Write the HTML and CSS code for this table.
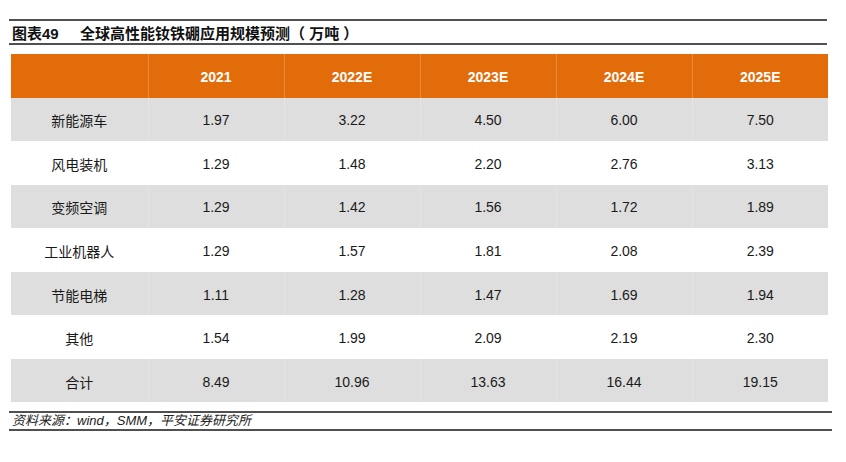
FILE: index.html
```html
<!DOCTYPE html>
<html lang="zh">
<head>
<meta charset="utf-8">
<link rel="stylesheet" href="styles.css">
</head>
<body>
<div class="page">
  <div class="title"><span class="fig">图表49</span><span class="name">全球高性能钕铁硼应用规模预测（ 万吨 ）</span></div>
  <table class="data">
    <colgroup><col class="c0"><col class="cn"><col class="cn"><col class="cn"><col class="cn"><col class="cn"></colgroup>
    <thead>
      <tr><th></th><th>2021</th><th>2022E</th><th>2023E</th><th>2024E</th><th>2025E</th></tr>
    </thead>
    <tbody>
      <tr class="alt"><td>新能源车</td><td>1.97</td><td>3.22</td><td>4.50</td><td>6.00</td><td>7.50</td></tr>
      <tr><td>风电装机</td><td>1.29</td><td>1.48</td><td>2.20</td><td>2.76</td><td>3.13</td></tr>
      <tr class="alt"><td>变频空调</td><td>1.29</td><td>1.42</td><td>1.56</td><td>1.72</td><td>1.89</td></tr>
      <tr><td>工业机器人</td><td>1.29</td><td>1.57</td><td>1.81</td><td>2.08</td><td>2.39</td></tr>
      <tr class="alt"><td>节能电梯</td><td>1.11</td><td>1.28</td><td>1.47</td><td>1.69</td><td>1.94</td></tr>
      <tr><td>其他</td><td>1.54</td><td>1.99</td><td>2.09</td><td>2.19</td><td>2.30</td></tr>
      <tr class="alt"><td>合计</td><td>8.49</td><td>10.96</td><td>13.63</td><td>16.44</td><td>19.15</td></tr>
    </tbody>
  </table>
  <div class="source">资料来源：wind，SMM，平安证券研究所</div>
</div>
</body>
</html>
```
FILE: styles.css
```css
html, body {
  margin: 0;
  padding: 0;
  background: #ffffff;
}
body {
  font-family: "Liberation Sans", Arial, "Noto Sans CJK SC", sans-serif;
  color: #1a1a1a;
}
.page {
  padding: 19px 0 0 9px;
  width: 830px;
}
.title {
  border-top: 2px solid #505050;
  border-bottom: 2px solid #505050;
  width: 818px;
  height: 26px;
  box-sizing: border-box;
  display: flex;
  align-items: center;
  font-size: 15px;
  color: #111;
  padding-left: 3px;
}
.title .fig {
  font-weight: 700;
  width: 68px;
}
.title .name {
  font-weight: 700;
}
.data {
  margin: 9px 0 0 2px;
  border-collapse: collapse;
  table-layout: fixed;
  width: 817px;
}
.data .c0 { width: 137px; }
.data .cn { width: 136px; }
.data th, .data td {
  height: 43.55px;
  padding: 2px 0 0;
  box-sizing: border-box;
  text-align: center;
  vertical-align: middle;
  font-size: 14px;
}
.data th {
  background: #e36c0a;
  color: #ffffff;
  font-weight: 700;
  border-left: 1px solid #ea8a3e;
}
.data th:first-child { border-left: none; }
.data td {
  color: #1a1a1a;
  border-left: 1px solid transparent;
}
.data td:first-child { border-left: none; }
.data tr.alt td {
  background: #dedede;
  border-left-color: #e4e4e4;
}
.data tr.alt td:first-child { border-left: none; }
.source {
  margin-top: 9px;
  width: 820px;
  border-top: 2px solid #505050;
  border-bottom: 2px solid #505050;
  height: 16px;
  font-size: 13px;
  font-style: italic;
  line-height: 16px;
  padding-left: 3px;
  color: #222;
}
```
